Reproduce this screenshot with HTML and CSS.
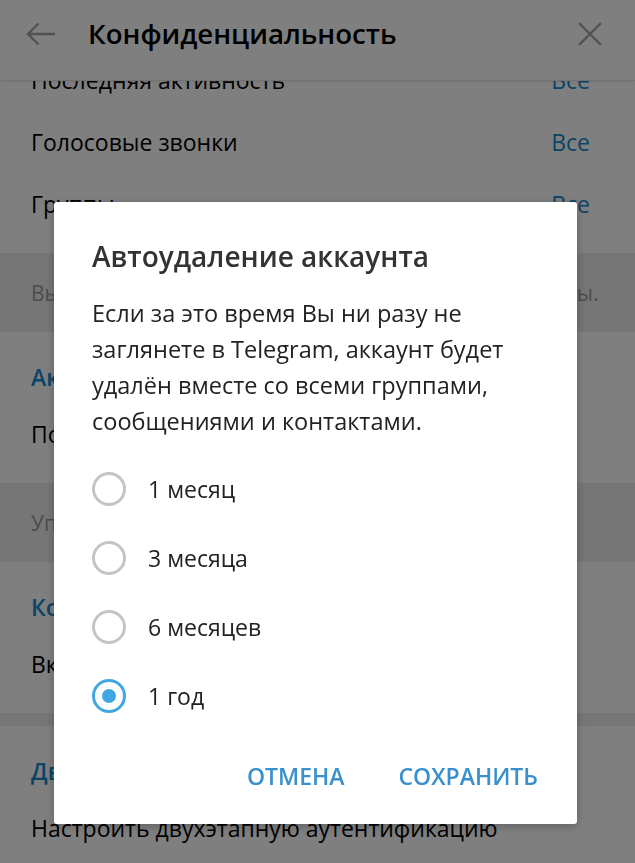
FILE: index.html
```html
<!DOCTYPE html>
<html lang="ru">
<head>
  <meta charset="UTF-8">
  <title>Конфиденциальность</title>
  <meta name="viewport" content="width=device-width, initial-scale=1.0">
  <link rel="stylesheet" href="styles.css">
</head>
<body>
  <!-- Settings page -->
  <div class="app">
    <header class="topbar">
      <button class="iconBtn backBtn" aria-label="Назад">
        <svg width="30" height="24" viewBox="0 0 30 24"><path d="M29 12H2M12.5 1.5L2 12l10.5 10.5" fill="none" stroke="#a3a3a3" stroke-width="2.4"/></svg>
      </button>
      <h1 class="topbarTitle">Конфиденциальность</h1>
      <button class="iconBtn closeBtn" aria-label="Закрыть">
        <svg width="26" height="26" viewBox="0 0 26 26"><path d="M2 2l22 22M24 2L2 24" fill="none" stroke="#a3a3a3" stroke-width="2.4"/></svg>
      </button>
    </header>

    <div class="scrollArea">
      <div class="list">
        <section class="section firstSection">
          <div class="row"><span>Последняя активность</span><span class="rowValue">Все</span></div>
          <div class="row"><span>Голосовые звонки</span><span class="rowValue">Все</span></div>
          <div class="row"><span>Группы</span><span class="rowValue">Все</span></div>
        </section>
        <div class="note">Вы можете решить, кто может добавлять Вас в группы.</div>

        <section class="section">
          <div class="sectionTitle">Активные сеансы</div>
          <div class="row"><span>Показать все сеансы</span></div>
        </section>
        <div class="note">Управляйте сеансами на других устройствах.</div>

        <section class="section">
          <div class="sectionTitle">Код-пароль</div>
          <div class="row"><span>Включить код-пароль</span></div>
        </section>
        <div class="divider"></div>

        <section class="section">
          <div class="sectionTitle">Двухэтапная аутентификация</div>
          <div class="row"><span>Настроить двухэтапную аутентификацию</span></div>
        </section>
      </div>
    </div>
  </div>

  <!-- Dialog -->
  <div class="overlay">
    <div class="dialog">
      <h2 class="dialogTitle">Автоудаление аккаунта</h2>
      <p class="dialogText">Если за это время Вы ни разу не заглянете в Telegram, аккаунт будет удалён вместе со всеми группами, сообщениями и контактами.</p>
      <div class="radioList">
        <label class="radioRow"><span class="radio"></span>1 месяц</label>
        <label class="radioRow"><span class="radio"></span>3 месяца</label>
        <label class="radioRow"><span class="radio"></span>6 месяцев</label>
        <label class="radioRow"><span class="radio checked"></span>1 год</label>
      </div>
      <div class="dialogActions">
        <button class="textBtn">Отмена</button>
        <button class="textBtn">Сохранить</button>
      </div>
    </div>
  </div>
</body>
</html>
```

FILE: styles.css
```css
/* Base */
body {
  margin: 0;
  padding: 0;
  background: #fff;
  font-family: "Open Sans", "DejaVu Sans", sans-serif;
  color: #000;
  overflow: hidden;
}
button {
  font-family: inherit;
  background: none;
  border: none;
  padding: 0;
  cursor: pointer;
}

/* Page */
.app {
  height: 100vh;
  display: flex;
  flex-direction: column;
}
.topbar {
  position: relative;
  z-index: 2;
  height: 68px;
  flex-shrink: 0;
  display: flex;
  align-items: center;
  padding: 0 32px 12px 26px;
  background: #fff;
  border-bottom: 1px solid #e4e4e4;
  box-shadow: 0 1px 3px rgba(0,0,0,0.08);
}
.iconBtn {
  display: flex;
  align-items: center;
}
.topbarTitle {
  flex: 1;
  margin: 0 0 0 32px;
  font-size: 27.6px;
  font-weight: 600;
  line-height: 1;
  color: #000;
}
.scrollArea {
  flex: 1;
  overflow: hidden;
}
.list {
  margin-top: -32px;
}
.section {
  padding: 19px 0 18px;
}
.firstSection {
  padding-top: 0;
}
.sectionTitle {
  height: 52px;
  display: flex;
  align-items: center;
  padding-left: 31px;
  font-size: 23px;
  font-weight: 600;
  color: #168acd;
}
.row {
  height: 62px;
  display: flex;
  align-items: center;
  justify-content: space-between;
  padding: 0 45px 0 31px;
  font-size: 23px;
}
.rowValue {
  color: #168acd;
}
.note {
  height: 79px;
  display: flex;
  align-items: center;
  padding-left: 31px;
  background: #ececec;
  font-size: 21px;
  color: #999;
  white-space: nowrap;
}
.divider {
  height: 13px;
  background: #ececec;
}

/* Dialog */
.overlay {
  position: fixed;
  top: 0; left: 0; right: 0; bottom: 0;
  z-index: 10;
  background: rgba(0,0,0,0.5);
  display: flex;
  align-items: flex-start;
  padding: 202px 0 0 54px;
}
.dialog {
  width: 523px;
  box-sizing: border-box;
  padding: 39px 26px 24px 38px;
  background: #fff;
  border-radius: 3px;
  box-shadow: 0 2px 10px rgba(0,0,0,0.25);
}
.dialogTitle {
  margin: 0 0 24px;
  font-size: 28px;
  font-weight: 600;
  line-height: 30px;
  color: #333;
}
.dialogText {
  margin: 0 0 15px;
  font-size: 23.5px;
  line-height: 36px;
  color: #222;
}
.radioRow {
  height: 69px;
  display: flex;
  align-items: center;
  font-size: 23px;
  color: #222;
}
.radio {
  width: 34px;
  height: 34px;
  box-sizing: border-box;
  border: 3px solid #c4c4c4;
  border-radius: 50%;
  margin-right: 22px;
  display: flex;
  align-items: center;
  justify-content: center;
}
.radio.checked {
  border-color: #40a7e3;
}
.radio.checked::after {
  content: "";
  width: 14px;
  height: 14px;
  border-radius: 50%;
  background: #40a7e3;
}
.dialogActions {
  display: flex;
  justify-content: flex-end;
  gap: 28px;
  margin-top: 22px;
}
.textBtn {
  padding: 12px 13px;
  font-size: 23px;
  line-height: 24px;
  font-weight: 600;
  text-transform: uppercase;
  color: #3a8fcd;
}
```
